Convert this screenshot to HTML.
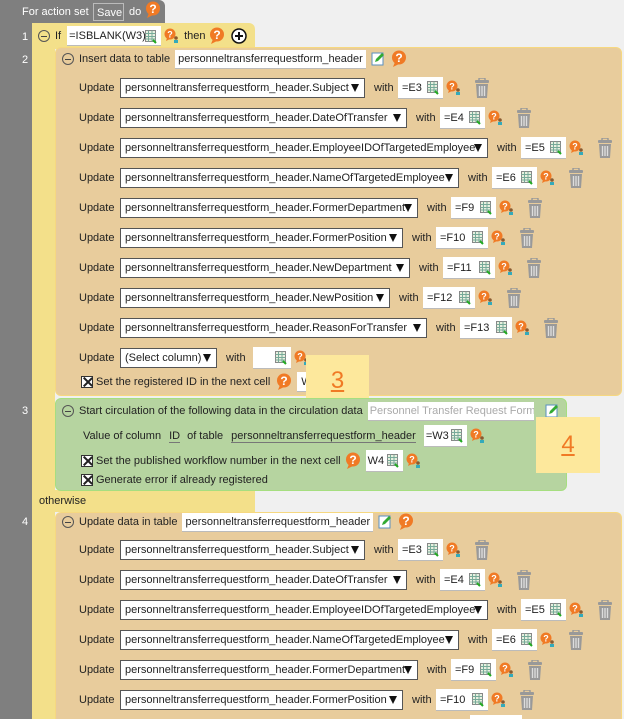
<!DOCTYPE html>
<html><head><meta charset="utf-8"><style>
*{box-sizing:border-box;margin:0;padding:0}
html,body{width:624px;height:719px;overflow:hidden}
body{background:#f0f0f0;font-family:"Liberation Sans",Arial,sans-serif;font-size:11px;color:#222;position:relative}
.abs{position:absolute}
.row{position:absolute;display:flex;align-items:center;height:22px;white-space:nowrap}
.up{width:41px;display:inline-block}
.sel{height:20px;border:1px solid #555;background:#fff;display:flex;align-items:center;padding-left:4px;position:relative;overflow:hidden}
.sel:after{content:"";position:absolute;right:5px;top:5px;border-left:4.5px solid transparent;border-right:4.5px solid transparent;border-top:8px solid #111}
.with{margin-left:9px;width:21px}
.inp{margin-left:3px;height:22px;background:#fff;border-bottom:1px solid #bbb;display:flex;align-items:center;padding-left:4px;position:relative;overflow:hidden}
.inp svg{position:absolute;right:3px;top:4px}
.hp{margin-left:3px}
.tr{margin-left:12px}
.ln{position:absolute;color:#fff;left:22px}
.cb{width:12px;height:12px;border:1px solid #333;background:#fff;position:relative;display:inline-block;margin-right:3px}
.cb:before,.cb:after{content:"";position:absolute;left:4.5px;top:-1px;width:1.6px;height:12px;background:#222;transform:rotate(45deg)}
.cb:after{transform:rotate(-45deg)}
.minus{width:12px;height:12px;border:1px solid #555;border-radius:50%;display:inline-block;position:relative;margin-right:5px}
.minus:after{content:"";position:absolute;left:2px;top:4.5px;width:6px;height:1px;background:#444}
.note{position:absolute;background:#fde89c;color:#f07a25;font-size:24px;text-align:center;text-decoration:underline}
</style></head><body>
<svg width="0" height="0" style="position:absolute"><defs>
<g id="grid"><rect x="0.5" y="0.5" width="10" height="11" fill="#e8f0e0" stroke="#888"/><path d="M0.5 3.5H10.5M0.5 6.5H10.5M0.5 9H10.5M3.5 .5V11.5M7 .5V11.5" stroke="#7a9" stroke-width="1"/><path d="M8 10l3 3" stroke="#2a2" stroke-width="2"/></g>
<g id="hp"><circle cx="6" cy="6" r="5.5" fill="#f07a25"/><path d="M3 10l-1 3 4-2z" fill="#f07a25"/><text x="6" y="9.5" font-size="9" font-weight="bold" fill="#fff" text-anchor="middle" font-family="Liberation Sans">?</text><circle cx="12" cy="10" r="1.8" fill="#8a5a30"/><rect x="10" y="12" width="4" height="3" fill="#3ab"/></g>
<g id="q"><circle cx="8" cy="7.5" r="7" fill="#f07a25"/><path d="M4 12l-2 5 6-3z" fill="#f07a25"/><text x="8" y="12" font-size="12" font-weight="bold" fill="#fff" text-anchor="middle" font-family="Liberation Sans">?</text></g>
<g id="tr"><rect x="1" y="2" width="14" height="3" rx="1" fill="#999"/><rect x="5" y="0" width="6" height="3" rx="1" fill="none" stroke="#999" stroke-width="1.5"/><path d="M2 6h12l-1 14H3z" fill="#999"/><path d="M5.5 8v10M8 8v10M10.5 8v10" stroke="#ddd" stroke-width="1.4"/></g>
<g id="ed"><rect x="1" y="2" width="11" height="12" fill="#fff" stroke="#5a8fbf"/><path d="M4 11l1-3 6-6 2 2-6 6z" fill="#3a3"/></g>
</defs></svg>

<div class="abs" style="left:0;top:0;width:32px;height:719px;background:#7f7f7f"></div>
<div class="abs" style="left:0;top:0;width:165px;height:24px;background:#7f7f7f;border-top-right-radius:6px"></div>
<div class="abs" style="left:22px;top:6px;color:#fff">For action set</div>
<div class="abs" style="left:93px;top:3px;width:31px;height:18px;border:1px solid #bbb;color:#fff;padding:3px 0 0 3px">Save</div>
<div class="abs" style="left:129px;top:6px;color:#fff">do</div>
<svg class="abs" style="left:145px;top:1px" width="16" height="18"><use href="#q"/></svg>
<div class="ln" style="top:31px">1</div>
<div class="ln" style="top:54px">2</div>
<div class="ln" style="top:405px">3</div>
<div class="ln" style="top:516px">4</div>

<div class="abs" style="left:32px;top:23px;width:223px;height:26px;background:#f3e08a;border-top-right-radius:6px"></div>
<div class="abs" style="left:32px;top:47px;width:23px;height:672px;background:#f3e08a"></div>
<div class="abs" style="left:32px;top:490px;width:223px;height:22px;background:#f3e08a"></div>
<div class="row" style="left:38px;top:25px"><span class="minus"></span>If<span class="inp" style="margin-left:6px;width:94px;height:20px;padding-left:2px">=ISBLANK(W3)<svg width="13" height="14"><use href="#grid"/></svg></span><svg class="hp" width="16" height="16"><use href="#hp"/></svg><span style="margin-left:4px">then</span><svg style="margin-left:3px" width="16" height="18"><use href="#q"/></svg><svg style="margin-left:6px" width="16" height="16"><circle cx="8" cy="8" r="7" fill="#fff" stroke="#111" stroke-width="1.5"/><path d="M4 8h8M8 4v8" stroke="#111" stroke-width="2"/></svg></div>
<div class="abs" style="left:39px;top:495px">otherwise</div>

<div class="abs" style="left:55px;top:47px;width:567px;height:349px;background:#e8cc9c;border:1px solid #f6d880;border-radius:6px"></div>
<div class="row" style="left:62px;top:48px"><span class="minus"></span>Insert data to table<span class="inp" style="margin-left:5px;width:191px;height:19px;padding-left:3px">personneltransferrequestform_header</span><svg style="margin-left:5px" width="14" height="16"><use href="#ed"/></svg><svg style="margin-left:6px" width="16" height="18"><use href="#q"/></svg></div>

<div class="row" style="left:79px;top:77px"><span class="up">Update</span><span class="sel" style="width:245px">personneltransferrequestform_header.Subject</span><span class="with">with</span><span class="inp" style="width:45px">=E3<svg width="13" height="14"><use href="#grid"/></svg></span><svg class="hp" width="16" height="16"><use href="#hp"/></svg><svg class="tr" width="16" height="20"><use href="#tr"/></svg></div>
<div class="row" style="left:79px;top:107px"><span class="up">Update</span><span class="sel" style="width:287px">personneltransferrequestform_header.DateOfTransfer</span><span class="with">with</span><span class="inp" style="width:45px">=E4<svg width="13" height="14"><use href="#grid"/></svg></span><svg class="hp" width="16" height="16"><use href="#hp"/></svg><svg class="tr" width="16" height="20"><use href="#tr"/></svg></div>
<div class="row" style="left:79px;top:137px"><span class="up">Update</span><span class="sel" style="width:368px">personneltransferrequestform_header.EmployeeIDOfTargetedEmployee</span><span class="with">with</span><span class="inp" style="width:45px">=E5<svg width="13" height="14"><use href="#grid"/></svg></span><svg class="hp" width="16" height="16"><use href="#hp"/></svg><svg class="tr" width="16" height="20"><use href="#tr"/></svg></div>
<div class="row" style="left:79px;top:167px"><span class="up">Update</span><span class="sel" style="width:339px">personneltransferrequestform_header.NameOfTargetedEmployee</span><span class="with">with</span><span class="inp" style="width:45px">=E6<svg width="13" height="14"><use href="#grid"/></svg></span><svg class="hp" width="16" height="16"><use href="#hp"/></svg><svg class="tr" width="16" height="20"><use href="#tr"/></svg></div>
<div class="row" style="left:79px;top:197px"><span class="up">Update</span><span class="sel" style="width:298px">personneltransferrequestform_header.FormerDepartment</span><span class="with">with</span><span class="inp" style="width:45px">=F9<svg width="13" height="14"><use href="#grid"/></svg></span><svg class="hp" width="16" height="16"><use href="#hp"/></svg><svg class="tr" width="16" height="20"><use href="#tr"/></svg></div>
<div class="row" style="left:79px;top:227px"><span class="up">Update</span><span class="sel" style="width:283px">personneltransferrequestform_header.FormerPosition</span><span class="with">with</span><span class="inp" style="width:52px">=F10<svg width="13" height="14"><use href="#grid"/></svg></span><svg class="hp" width="16" height="16"><use href="#hp"/></svg><svg class="tr" width="16" height="20"><use href="#tr"/></svg></div>
<div class="row" style="left:79px;top:257px"><span class="up">Update</span><span class="sel" style="width:290px">personneltransferrequestform_header.NewDepartment</span><span class="with">with</span><span class="inp" style="width:52px">=F11<svg width="13" height="14"><use href="#grid"/></svg></span><svg class="hp" width="16" height="16"><use href="#hp"/></svg><svg class="tr" width="16" height="20"><use href="#tr"/></svg></div>
<div class="row" style="left:79px;top:287px"><span class="up">Update</span><span class="sel" style="width:270px">personneltransferrequestform_header.NewPosition</span><span class="with">with</span><span class="inp" style="width:52px">=F12<svg width="13" height="14"><use href="#grid"/></svg></span><svg class="hp" width="16" height="16"><use href="#hp"/></svg><svg class="tr" width="16" height="20"><use href="#tr"/></svg></div>
<div class="row" style="left:79px;top:317px"><span class="up">Update</span><span class="sel" style="width:307px">personneltransferrequestform_header.ReasonForTransfer</span><span class="with">with</span><span class="inp" style="width:52px">=F13<svg width="13" height="14"><use href="#grid"/></svg></span><svg class="hp" width="16" height="16"><use href="#hp"/></svg><svg class="tr" width="16" height="20"><use href="#tr"/></svg></div>
<div class="row" style="left:79px;top:347px"><span class="up">Update</span><span class="sel" style="width:97px">(Select column)</span><span class="with">with</span><span class="inp" style="width:38px;margin-left:6px"><svg width="13" height="14"><use href="#grid"/></svg></span><svg class="hp" width="16" height="16"><use href="#hp"/></svg></div>
<div class="row" style="left:81px;top:371px"><span class="cb"></span>Set the registered ID in the next cell<svg style="margin-left:6px" width="16" height="18"><use href="#q"/></svg><span class="inp" style="width:30px;margin-left:5px;height:20px">W3</span></div>
<div class="note" style="left:306px;top:355px;width:63px;height:46px;line-height:52px">3</div>

<div class="abs" style="left:55px;top:398px;width:512px;height:93px;background:#b6d4a0;border:1.5px solid #a6de80;border-radius:6px"></div>
<div class="row" style="left:62px;top:400px"><span class="minus"></span>Start circulation of the following data in the circulation data<span class="inp" style="margin-left:5px;width:166px;height:19px;color:#aaa;padding-left:2px">Personnel Transfer Request Form</span><svg style="margin-left:11px" width="14" height="16"><use href="#ed"/></svg></div>
<div class="row" style="left:83px;top:425px">Value of column<span style="margin-left:8px;border-bottom:1px solid #777">ID</span><span style="margin-left:7px">of table</span><span style="margin-left:8px;border-bottom:1px solid #777">personneltransferrequestform_header</span><span class="inp" style="margin-left:8px;width:43px;padding-left:2px">=W3<svg width="13" height="14"><use href="#grid"/></svg></span><svg class="hp" width="16" height="16"><use href="#hp"/></svg></div>
<div class="row" style="left:81px;top:450px"><span class="cb"></span>Set the published workflow number in the next cell<svg style="margin-left:4px" width="16" height="18"><use href="#q"/></svg><span class="inp" style="width:37px;margin-left:5px;padding-left:2px">W4<svg width="13" height="14"><use href="#grid"/></svg></span><svg class="hp" width="16" height="16"><use href="#hp"/></svg></div>
<div class="row" style="left:81px;top:469px"><span class="cb"></span>Generate error if already registered</div>
<div class="note" style="left:536px;top:417px;width:64px;height:56px;line-height:56px">4</div>

<div class="abs" style="left:55px;top:512px;width:567px;height:207px;background:#e8cc9c;border:1px solid #f6d880;border-bottom:none;border-radius:6px 6px 0 0"></div>
<div class="row" style="left:62px;top:511px"><span class="minus"></span>Update data in table<span class="inp" style="margin-left:5px;width:191px;height:19px;padding-left:3px">personneltransferrequestform_header</span><svg style="margin-left:5px" width="14" height="16"><use href="#ed"/></svg><svg style="margin-left:6px" width="16" height="18"><use href="#q"/></svg></div>
<div class="row" style="left:79px;top:539px"><span class="up">Update</span><span class="sel" style="width:245px">personneltransferrequestform_header.Subject</span><span class="with">with</span><span class="inp" style="width:45px">=E3<svg width="13" height="14"><use href="#grid"/></svg></span><svg class="hp" width="16" height="16"><use href="#hp"/></svg><svg class="tr" width="16" height="20"><use href="#tr"/></svg></div>
<div class="row" style="left:79px;top:569px"><span class="up">Update</span><span class="sel" style="width:287px">personneltransferrequestform_header.DateOfTransfer</span><span class="with">with</span><span class="inp" style="width:45px">=E4<svg width="13" height="14"><use href="#grid"/></svg></span><svg class="hp" width="16" height="16"><use href="#hp"/></svg><svg class="tr" width="16" height="20"><use href="#tr"/></svg></div>
<div class="row" style="left:79px;top:599px"><span class="up">Update</span><span class="sel" style="width:368px">personneltransferrequestform_header.EmployeeIDOfTargetedEmployee</span><span class="with">with</span><span class="inp" style="width:45px">=E5<svg width="13" height="14"><use href="#grid"/></svg></span><svg class="hp" width="16" height="16"><use href="#hp"/></svg><svg class="tr" width="16" height="20"><use href="#tr"/></svg></div>
<div class="row" style="left:79px;top:629px"><span class="up">Update</span><span class="sel" style="width:339px">personneltransferrequestform_header.NameOfTargetedEmployee</span><span class="with">with</span><span class="inp" style="width:45px">=E6<svg width="13" height="14"><use href="#grid"/></svg></span><svg class="hp" width="16" height="16"><use href="#hp"/></svg><svg class="tr" width="16" height="20"><use href="#tr"/></svg></div>
<div class="row" style="left:79px;top:659px"><span class="up">Update</span><span class="sel" style="width:298px">personneltransferrequestform_header.FormerDepartment</span><span class="with">with</span><span class="inp" style="width:45px">=F9<svg width="13" height="14"><use href="#grid"/></svg></span><svg class="hp" width="16" height="16"><use href="#hp"/></svg><svg class="tr" width="16" height="20"><use href="#tr"/></svg></div>
<div class="row" style="left:79px;top:689px"><span class="up">Update</span><span class="sel" style="width:283px">personneltransferrequestform_header.FormerPosition</span><span class="with">with</span><span class="inp" style="width:52px">=F10<svg width="13" height="14"><use href="#grid"/></svg></span><svg class="hp" width="16" height="16"><use href="#hp"/></svg><svg class="tr" width="16" height="20"><use href="#tr"/></svg></div>
<div class="abs" style="left:470px;top:715px;width:52px;height:4px;background:#fff"></div>
</body></html>
